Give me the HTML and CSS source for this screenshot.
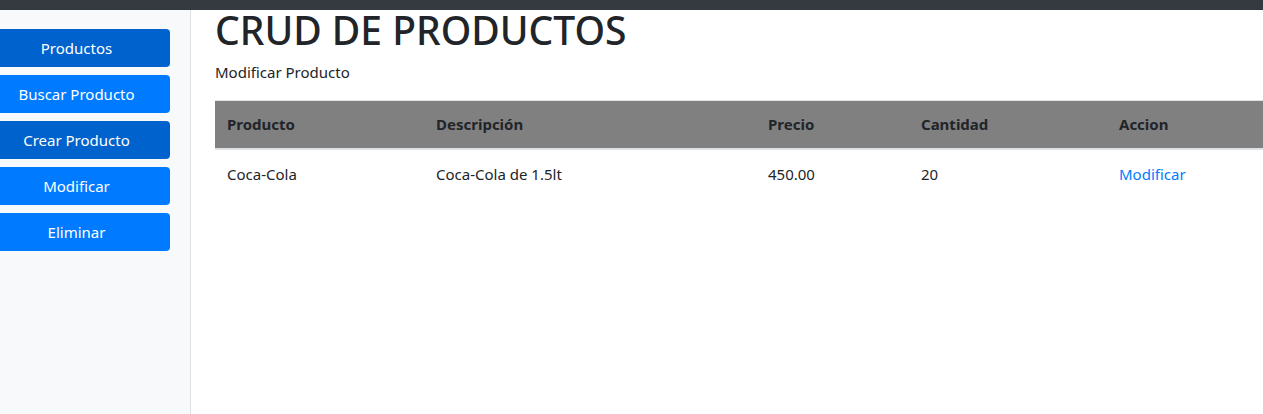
FILE: index.html
```html
<!DOCTYPE html>
<html lang="es">
<head>
<meta charset="utf-8">
<title>CRUD de Productos</title>
<link rel="stylesheet" href="styles.css">
</head>
<body>
<div class="topbar"></div>
<div class="layout">
  <nav class="sidebar">
    <a class="btn btn-active" href="#">Productos</a>
    <a class="btn" href="#">Buscar Producto</a>
    <a class="btn btn-active" href="#">Crear Producto</a>
    <a class="btn" href="#">Modificar</a>
    <a class="btn" href="#">Eliminar</a>
  </nav>
  <main class="main">
    <h1 class="title">CRUD DE PRODUCTOS</h1>
    <p class="subtitle">Modificar Producto</p>
    <table class="table">
      <colgroup>
        <col class="c1"><col class="c2"><col class="c3"><col class="c4"><col class="c5">
      </colgroup>
      <thead>
        <tr>
          <th>Producto</th>
          <th>Descripción</th>
          <th>Precio</th>
          <th>Cantidad</th>
          <th>Accion</th>
        </tr>
      </thead>
      <tbody>
        <tr>
          <td>Coca-Cola</td>
          <td>Coca-Cola de 1.5lt</td>
          <td>450.00</td>
          <td>20</td>
          <td><a class="link" href="#">Modificar</a></td>
        </tr>
      </tbody>
    </table>
  </main>
</div>
</body>
</html>
```

FILE: styles.css
```css
* { box-sizing: border-box; }
html, body {
  margin: 0;
  height: 100%;
}
body {
  font-family: "Noto Sans", "Open Sans", sans-serif;
  font-size: 16px;
  line-height: 1.5;
  color: #212529;
  background: #fff;
  overflow: hidden;
}
.topbar {
  height: 10px;
  background: #343a40;
}
.layout {
  display: flex;
  height: 404px;
}
.sidebar {
  width: 191px;
  flex: none;
  background: #f8f9fa;
  border-right: 1px solid #dee2e6;
  padding-top: 19px;
  display: flex;
  flex-direction: column;
  gap: 8px;
  overflow: hidden;
}
.btn {
  display: block;
  width: 187px;
  margin-left: -17px;
  height: 38px;
  line-height: 36px;
  border: 1px solid transparent;
  border-radius: 4px;
  background: #007bff;
  color: #fff;
  text-align: center;
  text-decoration: none;
  font-size: 15px;
}
.btn-active {
  background: #0062cc;
}
.main {
  flex: 1;
  min-width: 0;
  padding-left: 24px;
}
.title {
  margin: 0;
  font-size: 39px;
  font-weight: 500;
  line-height: 1;
}
.subtitle {
  margin: 11px 0 0;
  font-size: 15px;
  line-height: 24px;
}
.table {
  margin-top: 16px;
  width: 100%;
  border-collapse: collapse;
  table-layout: fixed;
}
.c1 { width: 209px; }
.c2 { width: 332px; }
.c3 { width: 153px; }
.c4 { width: 198px; }
.table th {
  background: #808080;
  text-align: left;
  font-weight: 700;
  font-size: 15px;
  line-height: 22px;
  padding: 12px 12px 13px;
  border-top: 1px solid #dee2e6;
  border-bottom: 2px solid #dee2e6;
}
.table td {
  font-size: 15px;
  line-height: 22px;
  padding: 13px 12px 14px;
}
.link {
  color: #007bff;
  text-decoration: none;
}
```
